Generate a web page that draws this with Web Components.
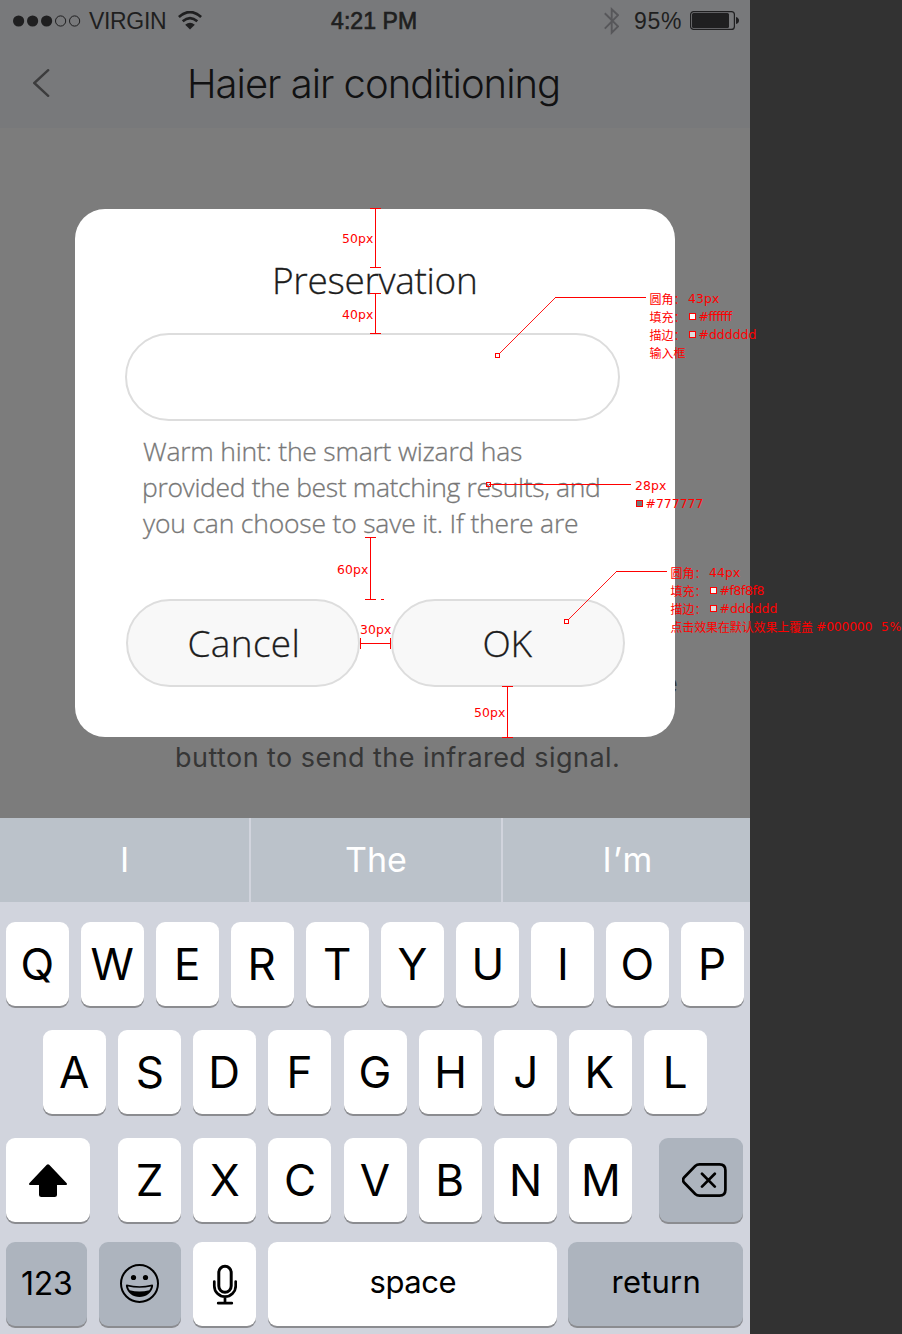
<!DOCTYPE html>
<html lang="en">
<head>
<meta charset="utf-8">
<title>Haier air conditioning</title>
<style>
html,body{margin:0;background:#323232;height:1334px;overflow:hidden}
</style>
</head>
<body>
<phone-page></phone-page>
<script>
const define = (name, html, after) => customElements.define(name, class extends HTMLElement {
  connectedCallback() {
    if (this.shadowRoot) return;
    const t = document.createElement('template');
    t.innerHTML = html;
    this.attachShadow({ mode: 'open' }).append(t.content.cloneNode(true));
    if (after) after(this, this.shadowRoot);
  }
});
const ctx = document.createElement('canvas').getContext('2d');

/* One line of type whose box runs from cap height (h) to baseline and spans its ink width (w). */
define('fit-text', `<style>
:host{display:block;flex:none}
span{display:block;line-height:0;white-space:pre}
</style><span><slot></slot></span>`, (el, root) => {
  const cs = getComputedStyle(el), text = el.textContent, span = root.querySelector('span');
  ctx.font = `${cs.fontWeight} ${cs.fontSize} ${cs.fontFamily}`;
  const m = ctx.measureText(text), ink = m.actualBoundingBoxLeft + m.actualBoundingBoxRight;
  const w = parseFloat(el.getAttribute('w')) || ink, h = parseFloat(el.getAttribute('h'));
  el.style.width = w + 'px';
  el.style.height = h + 'px';
  if (text.length > 1) span.style.letterSpacing = (w - ink) / (text.length - 1) + 'px';
  span.style.marginLeft = m.actualBoundingBoxLeft + 'px';
  span.style.paddingTop = h - (Math.round(m.fontBoundingBoxAscent) - Math.round(m.fontBoundingBoxDescent)) / 2 + 'px';
});

define('status-bar', `<style>
:host{display:grid;grid-template-columns:331px 85px 1fr;height:41px;align-items:center;color:#1f1f20;font:23px "Liberation Sans",Arial,sans-serif}
div{display:flex;align-items:center}
.l{padding-left:13px}.r{padding:0 11px 0 188px}
svg{display:block;flex:none}
.time{-webkit-text-stroke:.7px #1f1f20}
</style>
<div class="l"><svg width="68" height="12" viewBox="0 0 68 12"><g fill="#1f1f20"><circle cx="5.6" cy="6" r="5.6"/><circle cx="19.6" cy="6" r="5.6"/><circle cx="33.6" cy="6" r="5.6"/></g><g fill="none" stroke="#1f1f20"><circle cx="47.6" cy="6" r="5.1"/><circle cx="61.6" cy="6" r="5.1"/></g></svg>
<fit-text w="76" h="17" style="margin-left:8px">VIRGIN</fit-text>
<svg width="24" height="19" viewBox="0 0 24 19" style="margin-left:13px"><g fill="none" stroke="#1f1f20"><path d="M.9 6.1Q12-4 23.1 6.1" stroke-width="2.7"/><path d="M4.7 10.2Q12 3.9 19.3 10.2" stroke-width="2.6"/></g><path d="M7.2 13.7Q12 9.8 16.8 13.7L12 18.4Z" fill="#1f1f20"/></svg></div>
<fit-text class="time" w="85" h="17">4:21 PM</fit-text>
<div class="r"><svg width="15" height="28" viewBox="0 0 15 28"><path d="M.8 6.3L14 19.3 7.7 25.7V2.3L14 8.2.8 21.7" fill="none" stroke="#57575a" stroke-width="1.9"/></svg>
<fit-text w="46" h="17" style="margin-left:16px">95%</fit-text>
<svg width="49" height="19" viewBox="0 0 49 19" style="margin-left:9px"><rect x=".6" y=".6" width="43.8" height="17.8" rx="3" fill="none" stroke="#1f1f20" stroke-width="1.2"/><rect x="2" y="2" width="37" height="15" rx="1.5" fill="#1f1f20"/><path d="M46 6Q49 7 49 9.5T46 13Z" fill="#1f1f20"/></svg></div>`);

define('nav-bar', `<style>
:host{display:flex;height:87px;padding-left:33px;align-items:flex-start;color:#111112;font:275 40px Inter,sans-serif}
svg{margin-top:28px}
::slotted(fit-text){margin:28px 0 0 140px}
</style>
<svg width="17" height="28" viewBox="0 0 17 28"><path d="M15.2 1.2L1.3 14l13.9 12.8" fill="none" stroke="#3c3c3d" stroke-width="2.4" stroke-linecap="round"/></svg>
<slot></slot>`);

define('pill-button', `<style>
:host{display:flex;box-sizing:border-box;width:234px;height:88px;border:2px solid #ddd;border-radius:44px;background:#f8f8f8;justify-content:center;padding:29px 0 0 1px}
</style><slot></slot>`);

define('save-dialog', `<style>
:host{display:block;box-sizing:border-box;width:600px;height:528px;background:#fff;border-radius:30px;padding:59px 50px 50px;font:300 37px "Open Sans","Noto Sans",sans-serif;color:#1c1c1c;-webkit-text-stroke:.3px}
.title{margin-left:150px}
.input{box-sizing:border-box;width:495px;height:88px;border:2px solid #ddd;border-radius:44px;margin-top:39px}
.hint{display:grid;row-gap:17px;margin:21px 0 0 18px;color:#777;font-size:26.5px}
.row{display:flex;gap:31px;margin:66px 0 0 1px}
</style>
<fit-text class="title" w="200" h="26">Preservation</fit-text>
<div class="input"></div>
<div class="hint">
<fit-text w="379" h="19">Warm hint: the smart wizard has</fit-text>
<fit-text w="455" h="19" style="margin-left:1px">provided the best matching results, and</fit-text>
<fit-text w="435" h="19">you can choose to save it. If there are</fit-text>
</div>
<div class="row"><pill-button><fit-text w="108" h="27">Cancel</fit-text></pill-button><pill-button><fit-text w="48" h="27">OK</fit-text></pill-button></div>`);

define('key-cap', `<style>
:host{display:flex;flex:none;box-sizing:border-box;width:63px;height:84px;border-radius:9px;background:#fff;box-shadow:0 2px 0 #8b8c90;justify-content:center;padding-top:26px;color:#000;font:385 44px Inter,sans-serif}
:host([dark]){background:#adb4be}
</style><slot></slot>`);

const letters = s => [...s].map(c => `<key-cap><fit-text h="32">${c}</fit-text></key-cap>`).join('');
define('ios-keyboard', `<style>
:host{display:block;width:750px;height:516px;background:#d1d4dd}
.sug{display:grid;grid-template-columns:249px 250px 247px;column-gap:2px;height:84px;color:#fff;font:370 34px Inter,sans-serif}
.sug div{background:#bbc2ca;display:flex;justify-content:center;padding-top:29px}
.row{display:flex;gap:12px;height:84px;margin:0 0 24px 6px}
.r1{margin-top:20px}.r2{margin-left:43px;gap:12.15px}.r3{margin-bottom:20px}
.r3 key-cap+key-cap{margin-left:.17px}
svg{display:block;flex:none}
</style>
<div class="sug"><div><fit-text h="25">I</fit-text></div><div><fit-text w="60" h="25">The</fit-text></div><div style="padding-left:2px"><fit-text w="46" h="25">I’m</fit-text></div></div>
<div class="row r1">${letters('QWERTYUIOP')}</div>
<div class="row r2">${letters('ASDFGHJKL')}</div>
<div class="row r3"><key-cap style="width:84px;margin-right:16px"><svg width="38" height="33" viewBox="0 0 38 33"><path d="M17.8.7Q19-.4 20.2.7L37.5 19Q38.9 21 36.9 21H28V30.5Q28 33 25.5 33H12.5Q10 33 10 30.5V21H1.1Q-.9 21 .5 19Z"/></svg></key-cap>${letters('ZXCVBNM')}<key-cap dark style="width:84px;margin-left:14.8px;padding:25px 0 0 7px"><svg width="45" height="34" viewBox="0 0 45 34"><path d="M17.5 1.4H37.5Q43.4 1.4 43.4 7.3V26.7Q43.4 32.6 37.5 32.6H17.5Q15 32.6 13.2 31L2.3 19.8Q-.2 17 2.3 14.2L13.2 3Q15 1.4 17.5 1.4ZM20 10.8L32.8 23.6M32.8 10.8L20 23.6" fill="none" stroke="#000" stroke-width="2.7" stroke-linecap="round"/></svg></key-cap></div>
<div class="row"><key-cap dark style="width:81px;font-size:32px;padding-top:30px"><fit-text w="49" h="23">123</fit-text></key-cap>
<key-cap dark style="width:82px;padding:22px 1px 0 0"><svg width="39" height="39" viewBox="0 0 39 39"><circle cx="19.5" cy="19.5" r="18.5" fill="none" stroke="#000" stroke-width="2"/><circle cx="13.5" cy="13.5" r="2.6"/><circle cx="25.5" cy="13.5" r="2.6"/><path d="M6.8 20.6Q19.5 24 32.2 20.6 33.5 20.6 33 22.7C31.4 29.2 26 33 19.5 33S7.6 29.2 6 22.7Q5.5 20.6 6.8 20.6Z"/><path d="M7.9 22.4Q19.5 25.2 31.1 22.4 30.7 24.2 29.3 26.2 19.5 28.6 9.7 26.2 8.3 24.2 7.9 22.4Z" fill="#adb4be"/></svg></key-cap>
<key-cap style="padding-top:22px"><svg width="25" height="41" viewBox="0 0 25 41"><g fill="none" stroke="#000" stroke-width="2.7" stroke-linecap="round"><rect x="6.8" y="2.3" width="12.4" height="26" rx="6.2" stroke-width="3"/><path d="M2.3 17.5V22a10.7 10.7 0 0 0 21.4 0V17.5M13 33V39M6.2 39.2H19.8"/></g></svg></key-cap>
<key-cap style="width:289px;font-size:31px;padding:28px 0 0 1px"><fit-text w="85" h="23">space</fit-text></key-cap>
<key-cap dark style="width:175px;margin-left:-1px;font-size:31px;padding:28px 0 0 1px"><fit-text w="85" h="23">return</fit-text></key-cap></div>`);

/* Designer's redlines, floating over the whole board. Notes: x, baseline, text, ink width, cjk */
const notes = [
  [342,243,'50px',31],[342,319,'40px',31],[337,574,'60px',31],[360,634,'30px',31],[474,717,'50px',31],
  [649.5,304,'圆角：',0,1],[688,303,'43px',31],[649.5,322,'填充：',0,1],[698.5,321,'#ffffff',33.5],
  [649.5,340,'描边：',0,1],[698.5,339,'#dddddd',57],[649.5,358,'输入框',0,1],
  [635,490,'28px',31],[645.5,508,'#777777',57],
  [670.5,578,'圆角：',0,1],[709,577,'44px',31],[670.5,596,'填充：',0,1],[719.5,595,'#f8f8f8',45],
  [670.5,614,'描边：',0,1],[719.5,613,'#dddddd',57],
  [670.5,632,'点击效果在默认效果上覆盖',142.5,1],[816,631,'#000000',56.5],[881,631,'5%',20.5]
];
define('red-lines', `<style>
:host{position:absolute;inset:0;color:#f00;font:12.4px "DejaVu Sans",sans-serif}
svg{position:absolute;inset:0}
fit-text{position:absolute}
.c{font:12px "Noto Sans CJK SC",sans-serif}
</style>
<svg width="902" height="1334" viewBox="0 0 902 1334"><g fill="none" stroke="#f00" stroke-width="1">
<path shape-rendering="crispEdges" d="M370 208.5H381M375.5 208V267M370 267.5H381M370 293.5H381M375.5 293V333M370 333.5H381M365 537.5H376M370.5 537V599M365 599.5H376M381 599.5H384M360.5 638V649M360 643.5H391M390.5 638V649M502 686.5H513M507.5 686V738M502 737.5H513M555 297.5H646M489 484.5H631M616 571.5H667"/>
<path d="M499.5 353.5L555.5 297.5M568.5 619.5L616.5 571.5" stroke-width=".9"/></g>
<g stroke="#f00" fill="#fff" shape-rendering="crispEdges"><rect x="495.5" y="353.5" width="4" height="4"/><rect x="486.5" y="482.5" width="4" height="4" fill="none"/><rect x="564.5" y="619.5" width="4" height="4"/>
<rect x="689.5" y="313.5" width="6" height="6"/><rect x="689.5" y="331.5" width="6" height="6" fill="#ddd"/><rect x="636.5" y="500.5" width="6" height="6" fill="#777"/><rect x="710.5" y="587.5" width="6" height="6" fill="#f8f8f8"/><rect x="710.5" y="605.5" width="6" height="6" fill="#ddd"/></g></svg>
${notes.map(([x, y, t, w, c]) => `<fit-text${c ? ' class="c"' : ''} h="9" w="${w}" style="left:${x}px;top:${y - 9}px">${t}</fit-text>`).join('')}`);

define('phone-page', `<style>
:host{display:block;position:relative;width:902px;height:1334px;overflow:hidden;background:#323232}
.screen{width:750px;height:1334px;background:#7c7c7c;display:grid;grid-template-rows:128px 690px 516px}
header{background:#78797b}
main{display:grid;grid-template-columns:750px;color:#363636;font:390 27px Inter,sans-serif}
.copy,save-dialog{grid-area:1/1}
.copy{padding-top:545px}
save-dialog{margin:81px 0 0 75px}
</style>
<div class="screen"><header><status-bar></status-bar><nav-bar><fit-text w="368" h="29">Haier air conditioning</fit-text></nav-bar></header>
<main><div class="copy"><fit-text h="20" style="margin-left:663px">e</fit-text><fit-text w="441" h="20" style="margin:54px 0 0 177px">button to send the infrared signal.</fit-text></div><save-dialog></save-dialog></main>
<ios-keyboard></ios-keyboard></div>
<red-lines></red-lines>`);
</script>
</body>
</html>
